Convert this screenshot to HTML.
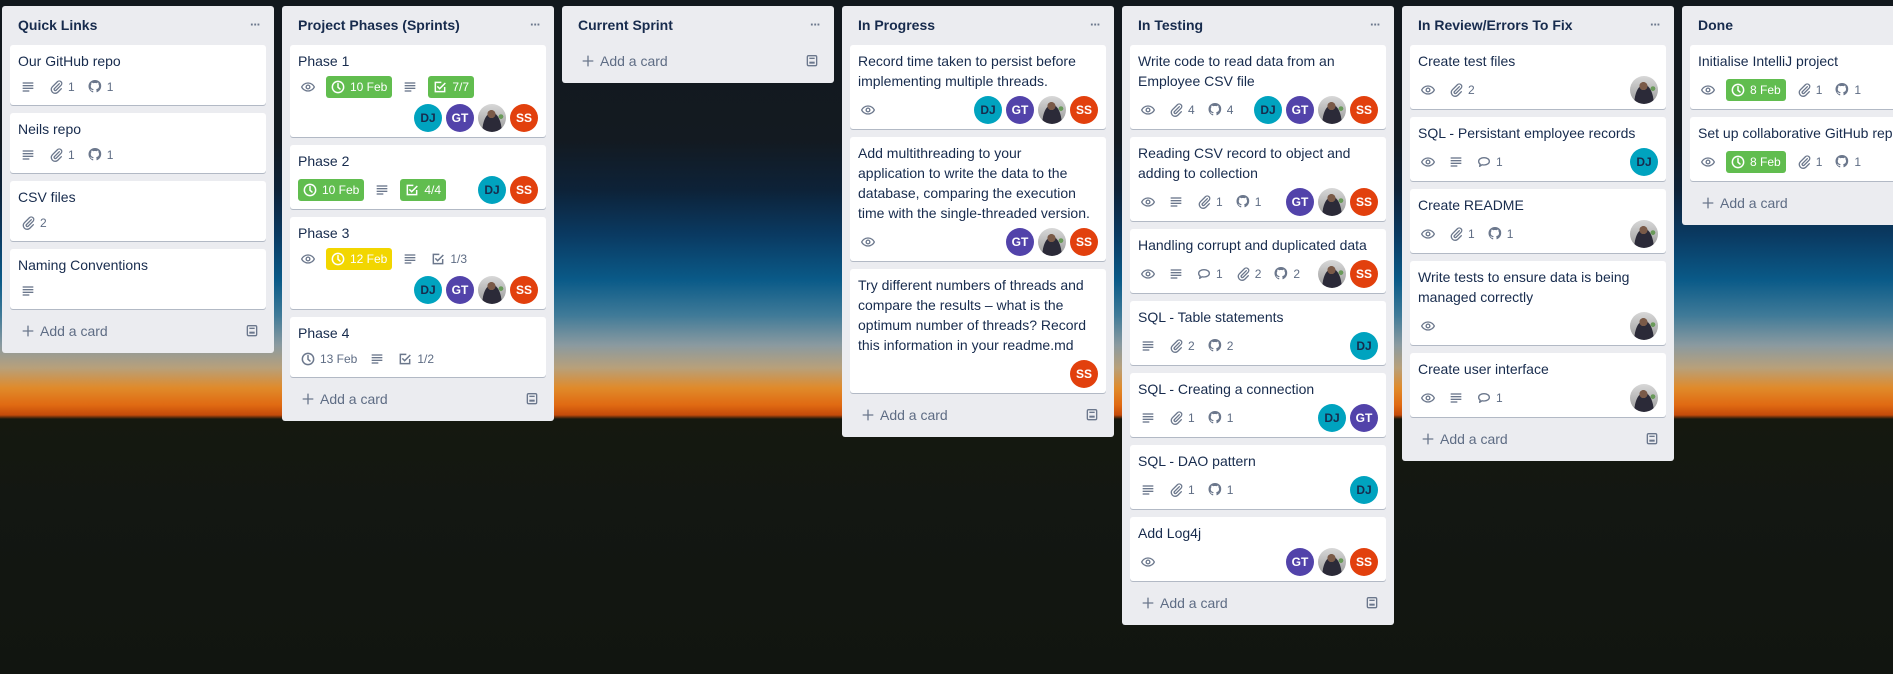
<!DOCTYPE html>
<html><head><meta charset="utf-8"><style>
*{box-sizing:border-box;margin:0;padding:0}
html,body{width:1893px;height:674px;overflow:hidden}
body{position:relative;font-family:"Liberation Sans",sans-serif;
background:linear-gradient(180deg,#12181d 0px,#131a21 140px,#0d2238 190px,#0a3a62 235px,#0a5a88 280px,#3f7a98 315px,#8a9aa0 345px,#b8a07a 368px,#e08a2a 388px,#e06a12 405px,#c44a0a 415px,#15180f 419px,#131712 500px,#111510 674px);}
.list{position:absolute;top:6px;width:272px;background:#ebecf0;border-radius:3px}
.hd{height:39px;position:relative}
.hd b{position:absolute;left:16px;top:9px;line-height:20px;font-size:14px;color:#172b4d}
.hd i{position:absolute;right:14px;top:12px;font-style:normal;color:#6b778c;font-size:13px;font-weight:bold;letter-spacing:-1px;line-height:14px}
.cards{padding:0 8px}
.card{background:#fff;border-radius:3px;box-shadow:0 1px 0 rgba(9,30,66,.25);margin-bottom:8px;padding:6px 8px 4px}
.t{font-size:14px;line-height:20px;color:#172b4d;white-space:nowrap;overflow:hidden}
.m{display:flex;align-items:center;height:28px;margin-top:2px}
.m.a{height:32px;padding-top:2px}
.m.n{margin-top:0}
.b{display:flex;align-items:center;height:20px;padding:0 2px;margin-right:8px;color:#5e6c84;font-size:12px}
.b svg{width:16px;height:16px;flex:none}
.b span{padding-left:4px}
.lab{display:flex;align-items:center;height:22px;padding:0 5px 0 4px;border-radius:3px;color:#fff;font-size:12px;margin-right:8px}
.lab svg{width:16px;height:16px}
.lab span{padding-left:4px}
.g{background:#61bd4f}.y{background:#f2d600}
.avs{margin-left:auto;display:flex}
.av{width:28px;height:28px;border-radius:50%;margin-left:4px;font-size:12px;font-weight:bold;display:flex;align-items:center;justify-content:center;color:#fff}
.dj{background:#00a3bf;color:#172b4d}.gt{background:#5243aa}.ss{background:#e2400d}
.ph{background:radial-gradient(circle at 48% 36%,#7a5a48 0 17%,transparent 18%),radial-gradient(ellipse at 50% 100%,#2b2a38 0 48%,transparent 50%),radial-gradient(circle at 82% 45%,#6a9a5a 0 8%,transparent 9%),linear-gradient(#d8d8d8,#9a9a9a)}
.add{height:28px;margin:2px 8px 8px;display:flex;align-items:center;color:#5e6c84;font-size:14px;padding:0 6px 0 10px}
.add svg{width:16px;height:16px}
.add span{padding-left:4px}
.add .tp{margin-left:auto}
</style></head><body>
<svg width="0" height="0" style="position:absolute">
<symbol id="eye" viewBox="0 0 24 24"><path d="M12 6C7 6 3.5 9.5 2.5 12 3.5 14.5 7 18 12 18s8.5-3.5 9.5-6C20.5 9.5 17 6 12 6z" fill="none" stroke="#6b778c" stroke-width="2"/><circle cx="12" cy="12" r="2.8" fill="none" stroke="#6b778c" stroke-width="2"/></symbol>
<symbol id="desc" viewBox="0 0 24 24"><g fill="#6b778c"><rect x="4" y="5" width="16" height="2"/><rect x="4" y="9" width="16" height="2"/><rect x="4" y="13" width="16" height="2"/><rect x="4" y="17" width="10" height="2"/></g></symbol>
<symbol id="att" viewBox="0 0 24 24"><path d="M17 7l-7.5 7.5a1.8 1.8 0 0 0 2.5 2.5L19.5 9.5a3.8 3.8 0 0 0-5.4-5.4L6.5 11.7a5.8 5.8 0 0 0 8.2 8.2L20 14.5" fill="none" stroke="#6b778c" stroke-width="2" stroke-linecap="round"/></symbol>
<symbol id="gh" viewBox="0 0 16 16"><path fill="#6b778c" d="M8 1C4.1 1 1.5 3.9 1.5 7.3c0 2.8 1.8 5.2 4.3 6.1.3 0 .4-.1.4-.3v-1.2c-1.7.4-2.1-.7-2.1-.7-.3-.7-.7-.9-.7-.9-.6-.4 0-.4 0-.4.6 0 1 .6 1 .6.6 1 1.5.7 1.900.5 0-.4.2-.7.4-.9-1.4-.2-2.9-.7-2.9-3.1 0-.7.2-1.2.6-1.7 0-.2-.3-.8.1-1.700 0 0 .5-.2 1.8.6.5-.1 1.1-.2 1.6-.2s1.1.1 1.6.2c1.2-.8 1.8-.6 1.8-.6.3.9.1 1.5.1 1.7.4.4.6 1 .6 1.7 0 2.4-1.5 2.9-2.9 3.1.2.2.4.6.4 1.1v1.7c0 .2.1.4.4.3 2.5-.9 4.3-3.3 4.3-6.1C14.5 3.9 11.9 1 8 1z"/></symbol>
<symbol id="cm" viewBox="0 0 24 24"><path d="M4 11c0-3.3 3.6-5.5 8-5.5s8 2.2 8 5.5-3.6 5.5-8 5.5c-1 0-2-.1-2.9-.4L5.5 18.5l.8-3.3C4.8 14.2 4 12.7 4 11z" fill="none" stroke="#6b778c" stroke-width="2" stroke-linejoin="round"/></symbol>
<symbol id="clk" viewBox="0 0 24 24"><circle cx="12" cy="12" r="8.5" fill="none" stroke="currentColor" stroke-width="2.2"/><path d="M12 7v5.5l3 2.5" fill="none" stroke="currentColor" stroke-width="2.2" stroke-linecap="round"/></symbol>
<symbol id="chk" viewBox="0 0 24 24"><path d="M19 12v7H5V5h9" fill="none" stroke="currentColor" stroke-width="2.2"/><path d="M8 11l3.5 3.5L20 6" fill="none" stroke="currentColor" stroke-width="2.2"/></symbol>
<symbol id="plus" viewBox="0 0 24 24"><path d="M12 4v16M4 12h16" stroke="#6b778c" stroke-width="2"/></symbol>
<symbol id="tpl" viewBox="0 0 24 24"><rect x="5" y="4" width="14" height="15" rx="2" fill="none" stroke="#6b778c" stroke-width="2"/><rect x="8" y="13" width="8" height="3" fill="#6b778c"/><path d="M8 8h8" stroke="#6b778c" stroke-width="2"/></symbol>
</svg>

<div class="list" style="left:2px">
<div class="hd"><b>Quick Links</b><i>···</i></div>
<div class="cards">
<div class="card"><div class="t">Our GitHub repo</div><div class="m"><div class="b"><svg><use href="#desc"/></svg></div><div class="b"><svg><use href="#att"/></svg><span>1</span></div><div class="b"><svg><use href="#gh"/></svg><span>1</span></div></div></div>
<div class="card"><div class="t">Neils repo</div><div class="m"><div class="b"><svg><use href="#desc"/></svg></div><div class="b"><svg><use href="#att"/></svg><span>1</span></div><div class="b"><svg><use href="#gh"/></svg><span>1</span></div></div></div>
<div class="card"><div class="t">CSV files</div><div class="m"><div class="b"><svg><use href="#att"/></svg><span>2</span></div></div></div>
<div class="card"><div class="t">Naming Conventions</div><div class="m"><div class="b"><svg><use href="#desc"/></svg></div></div></div>
</div>
<div class="add"><svg><use href="#plus"/></svg><span>Add a card</span><svg class="tp"><use href="#tpl"/></svg></div>
</div>

<div class="list" style="left:282px">
<div class="hd"><b>Project Phases (Sprints)</b><i>···</i></div>
<div class="cards">
<div class="card"><div class="t">Phase 1</div>
<div class="m"><div class="b"><svg><use href="#eye"/></svg></div><div class="lab g"><svg><use href="#clk"/></svg><span>10 Feb</span></div><div class="b"><svg><use href="#desc"/></svg></div><div class="lab g"><svg><use href="#chk"/></svg><span>7/7</span></div></div>
<div class="m a n"><div class="avs"><div class="av dj">DJ</div><div class="av gt">GT</div><div class="av ph"></div><div class="av ss">SS</div></div></div></div>
<div class="card"><div class="t">Phase 2</div>
<div class="m a"><div class="lab g"><svg><use href="#clk"/></svg><span>10 Feb</span></div><div class="b"><svg><use href="#desc"/></svg></div><div class="lab g"><svg><use href="#chk"/></svg><span>4/4</span></div><div class="avs"><div class="av dj">DJ</div><div class="av ss">SS</div></div></div></div>
<div class="card"><div class="t">Phase 3</div>
<div class="m"><div class="b"><svg><use href="#eye"/></svg></div><div class="lab y"><svg><use href="#clk"/></svg><span>12 Feb</span></div><div class="b"><svg><use href="#desc"/></svg></div><div class="b" style="color:#6b778c"><svg><use href="#chk"/></svg><span style="color:#5e6c84">1/3</span></div></div>
<div class="m a n"><div class="avs"><div class="av dj">DJ</div><div class="av gt">GT</div><div class="av ph"></div><div class="av ss">SS</div></div></div></div>
<div class="card"><div class="t">Phase 4</div>
<div class="m"><div class="b" style="color:#6b778c"><svg><use href="#clk"/></svg><span style="color:#5e6c84">13 Feb</span></div><div class="b"><svg><use href="#desc"/></svg></div><div class="b" style="color:#6b778c"><svg><use href="#chk"/></svg><span style="color:#5e6c84">1/2</span></div></div></div>
</div>
<div class="add"><svg><use href="#plus"/></svg><span>Add a card</span><svg class="tp"><use href="#tpl"/></svg></div>
</div>

<div class="list" style="left:562px">
<div class="hd"><b>Current Sprint</b><i>···</i></div>
<div class="add"><svg><use href="#plus"/></svg><span>Add a card</span><svg class="tp"><use href="#tpl"/></svg></div>
</div>

<div class="list" style="left:842px">
<div class="hd"><b>In Progress</b><i>···</i></div>
<div class="cards">
<div class="card"><div class="t">Record time taken to persist before<br>implementing multiple threads.</div>
<div class="m a"><div class="b"><svg><use href="#eye"/></svg></div><div class="avs"><div class="av dj">DJ</div><div class="av gt">GT</div><div class="av ph"></div><div class="av ss">SS</div></div></div></div>
<div class="card"><div class="t">Add multithreading to your<br>application to write the data to the<br>database, comparing the execution<br>time with the single-threaded version.</div>
<div class="m a"><div class="b"><svg><use href="#eye"/></svg></div><div class="avs"><div class="av gt">GT</div><div class="av ph"></div><div class="av ss">SS</div></div></div></div>
<div class="card"><div class="t">Try different numbers of threads and<br>compare the results – what is the<br>optimum number of threads? Record<br>this information in your readme.md</div>
<div class="m a"><div class="avs"><div class="av ss">SS</div></div></div></div>
</div>
<div class="add"><svg><use href="#plus"/></svg><span>Add a card</span><svg class="tp"><use href="#tpl"/></svg></div>
</div>

<div class="list" style="left:1122px">
<div class="hd"><b>In Testing</b><i>···</i></div>
<div class="cards">
<div class="card"><div class="t">Write code to read data from an<br>Employee CSV file</div>
<div class="m a"><div class="b"><svg><use href="#eye"/></svg></div><div class="b"><svg><use href="#att"/></svg><span>4</span></div><div class="b"><svg><use href="#gh"/></svg><span>4</span></div><div class="avs"><div class="av dj">DJ</div><div class="av gt">GT</div><div class="av ph"></div><div class="av ss">SS</div></div></div></div>
<div class="card"><div class="t">Reading CSV record to object and<br>adding to collection</div>
<div class="m a"><div class="b"><svg><use href="#eye"/></svg></div><div class="b"><svg><use href="#desc"/></svg></div><div class="b"><svg><use href="#att"/></svg><span>1</span></div><div class="b"><svg><use href="#gh"/></svg><span>1</span></div><div class="avs"><div class="av gt">GT</div><div class="av ph"></div><div class="av ss">SS</div></div></div></div>
<div class="card"><div class="t">Handling corrupt and duplicated data</div>
<div class="m a"><div class="b"><svg><use href="#eye"/></svg></div><div class="b"><svg><use href="#desc"/></svg></div><div class="b"><svg><use href="#cm"/></svg><span>1</span></div><div class="b"><svg><use href="#att"/></svg><span>2</span></div><div class="b"><svg><use href="#gh"/></svg><span>2</span></div><div class="avs"><div class="av ph"></div><div class="av ss">SS</div></div></div></div>
<div class="card"><div class="t">SQL - Table statements</div>
<div class="m a"><div class="b"><svg><use href="#desc"/></svg></div><div class="b"><svg><use href="#att"/></svg><span>2</span></div><div class="b"><svg><use href="#gh"/></svg><span>2</span></div><div class="avs"><div class="av dj">DJ</div></div></div></div>
<div class="card"><div class="t">SQL - Creating a connection</div>
<div class="m a"><div class="b"><svg><use href="#desc"/></svg></div><div class="b"><svg><use href="#att"/></svg><span>1</span></div><div class="b"><svg><use href="#gh"/></svg><span>1</span></div><div class="avs"><div class="av dj">DJ</div><div class="av gt">GT</div></div></div></div>
<div class="card"><div class="t">SQL - DAO pattern</div>
<div class="m a"><div class="b"><svg><use href="#desc"/></svg></div><div class="b"><svg><use href="#att"/></svg><span>1</span></div><div class="b"><svg><use href="#gh"/></svg><span>1</span></div><div class="avs"><div class="av dj">DJ</div></div></div></div>
<div class="card"><div class="t">Add Log4j</div>
<div class="m a"><div class="b"><svg><use href="#eye"/></svg></div><div class="avs"><div class="av gt">GT</div><div class="av ph"></div><div class="av ss">SS</div></div></div></div>
</div>
<div class="add"><svg><use href="#plus"/></svg><span>Add a card</span><svg class="tp"><use href="#tpl"/></svg></div>
</div>

<div class="list" style="left:1402px">
<div class="hd"><b>In Review/Errors To Fix</b><i>···</i></div>
<div class="cards">
<div class="card"><div class="t">Create test files</div>
<div class="m a"><div class="b"><svg><use href="#eye"/></svg></div><div class="b"><svg><use href="#att"/></svg><span>2</span></div><div class="avs"><div class="av ph"></div></div></div></div>
<div class="card"><div class="t">SQL - Persistant employee records</div>
<div class="m a"><div class="b"><svg><use href="#eye"/></svg></div><div class="b"><svg><use href="#desc"/></svg></div><div class="b"><svg><use href="#cm"/></svg><span>1</span></div><div class="avs"><div class="av dj">DJ</div></div></div></div>
<div class="card"><div class="t">Create README</div>
<div class="m a"><div class="b"><svg><use href="#eye"/></svg></div><div class="b"><svg><use href="#att"/></svg><span>1</span></div><div class="b"><svg><use href="#gh"/></svg><span>1</span></div><div class="avs"><div class="av ph"></div></div></div></div>
<div class="card"><div class="t">Write tests to ensure data is being<br>managed correctly</div>
<div class="m a"><div class="b"><svg><use href="#eye"/></svg></div><div class="avs"><div class="av ph"></div></div></div></div>
<div class="card"><div class="t">Create user interface</div>
<div class="m a"><div class="b"><svg><use href="#eye"/></svg></div><div class="b"><svg><use href="#desc"/></svg></div><div class="b"><svg><use href="#cm"/></svg><span>1</span></div><div class="avs"><div class="av ph"></div></div></div></div>
</div>
<div class="add"><svg><use href="#plus"/></svg><span>Add a card</span><svg class="tp"><use href="#tpl"/></svg></div>
</div>

<div class="list" style="left:1682px">
<div class="hd"><b>Done</b><i>···</i></div>
<div class="cards">
<div class="card"><div class="t">Initialise IntelliJ project</div>
<div class="m a"><div class="b"><svg><use href="#eye"/></svg></div><div class="lab g"><svg><use href="#clk"/></svg><span>8 Feb</span></div><div class="b"><svg><use href="#att"/></svg><span>1</span></div><div class="b"><svg><use href="#gh"/></svg><span>1</span></div></div></div>
<div class="card"><div class="t">Set up collaborative GitHub repo</div>
<div class="m a"><div class="b"><svg><use href="#eye"/></svg></div><div class="lab g"><svg><use href="#clk"/></svg><span>8 Feb</span></div><div class="b"><svg><use href="#att"/></svg><span>1</span></div><div class="b"><svg><use href="#gh"/></svg><span>1</span></div></div></div>
</div>
<div class="add"><svg><use href="#plus"/></svg><span>Add a card</span><svg class="tp"><use href="#tpl"/></svg></div>
</div>
</body></html>
